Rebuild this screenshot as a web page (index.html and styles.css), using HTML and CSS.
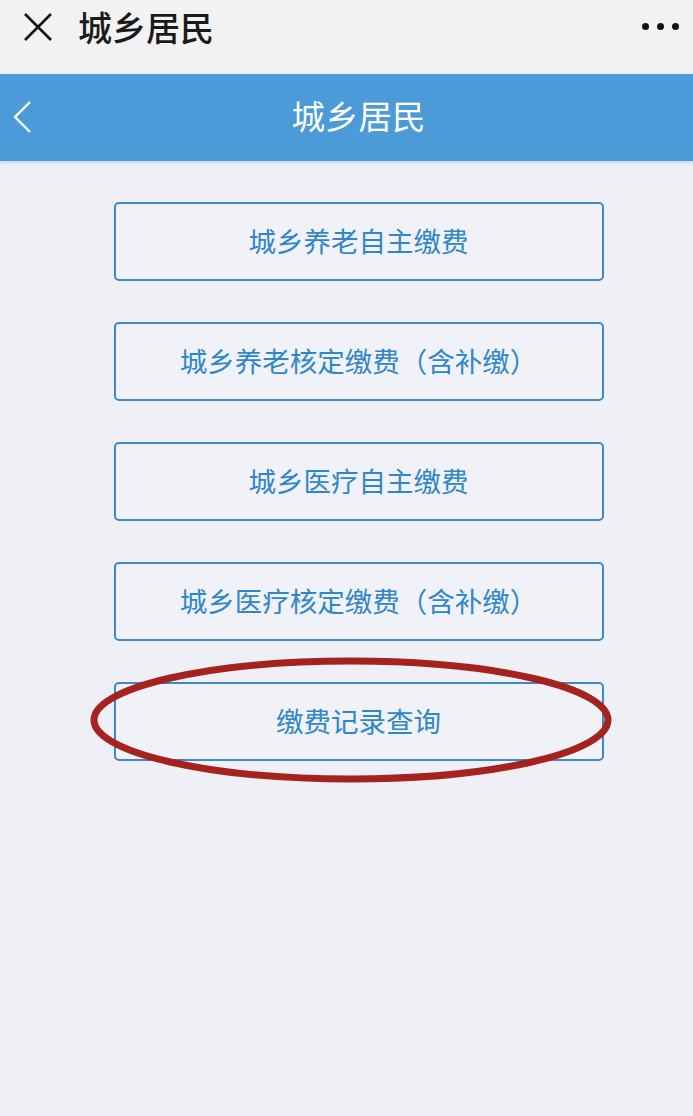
FILE: index.html
```html
<!DOCTYPE html>
<html lang="zh-CN">
<head>
    <meta charset="UTF-8">
    <meta name="viewport" content="width=device-width, initial-scale=1.0">
    <title>城乡居民</title>
    <link rel="stylesheet" href="styles.css">
</head>
<body>
    <div class="topbar">
        <svg class="close" width="30" height="30" viewBox="0 0 30 30">
            <path d="M2 2 L28 28 M28 2 L2 28" stroke="#111" stroke-width="2.6" fill="none"/>
        </svg>
        <span class="top-title">城乡居民</span>
        <div class="more">
            <i></i><i></i><i></i>
        </div>
    </div>

    <div class="header">
        <svg class="back" width="20" height="32" viewBox="0 0 20 32">
            <path d="M18 1 L3 16 L18 31" stroke="#fff" stroke-width="2.4" fill="none"/>
        </svg>
        <h1>城乡居民</h1>
    </div>

    <div class="content">
        <a class="btn" href="#">城乡养老自主缴费</a>
        <a class="btn" href="#">城乡养老核定缴费（含补缴）</a>
        <a class="btn" href="#">城乡医疗自主缴费</a>
        <a class="btn" href="#">城乡医疗核定缴费（含补缴）</a>
        <a class="btn" href="#">缴费记录查询</a>

        <!-- 手画的红圈 -->
        <svg class="mark" width="530" height="135" viewBox="0 0 530 135">
            <ellipse cx="265" cy="67" rx="257" ry="59" fill="none" stroke="#a6221e" stroke-width="7"/>
        </svg>
    </div>
</body>
</html>
```

FILE: styles.css
```css
*{
    padding: 0;
    margin: 0;
    box-sizing: border-box;
}
body{
    width: 693px;
    min-height: 1116px;
    background-color: #eef0f5;
    font-family: "Noto Sans CJK SC", "Noto Sans", sans-serif;
}
.topbar{
    height: 74px;
    background-color: #f2f2f2;
    border-bottom: 3px solid #e8eef8;
    display: flex;
    align-items: center;
    padding: 0 14px 18px 23px;

    .close{
        flex-shrink: 0;
    }
    .top-title{
        margin-left: 25px;
        font-size: 34px;
        font-weight: 500;
        color: #1a1a1a;
    }
    .more{
        margin-left: auto;
        display: flex;
        gap: 8px;
        i{
            display: block;
            width: 7px;
            height: 7px;
            border-radius: 50%;
            background-color: #111;
        }
    }
}
.header{
    position: relative;
    height: 87px;
    background-color: #4a9bd7;
    display: flex;
    align-items: center;
    justify-content: center;
    box-shadow: 0 2px 3px rgba(120,140,170,.25);

    .back{
        position: absolute;
        left: 12px;
        top: 27px;
    }
    h1{
        font-size: 33.5px;
        font-weight: 400;
        color: #fff;
        margin: 0 0 6px 24px;
    }
}
.content{
    position: relative;
    padding-top: 41px;
    display: flex;
    flex-direction: column;
    align-items: center;
    row-gap: 41px;

    .btn{
        display: flex;
        align-items: center;
        justify-content: center;
        width: 490px;
        height: 79px;
        margin-left: 24px;
        padding-bottom: 4px;
        border: 2px solid #3e88c6;
        border-radius: 5px;
        background-color: #f1f2f8;
        color: #2f86c9;
        font-size: 27.5px;
        text-decoration: none;
    }
    .mark{
        position: absolute;
        left: 86px;
        top: 492px;
    }
}
```
